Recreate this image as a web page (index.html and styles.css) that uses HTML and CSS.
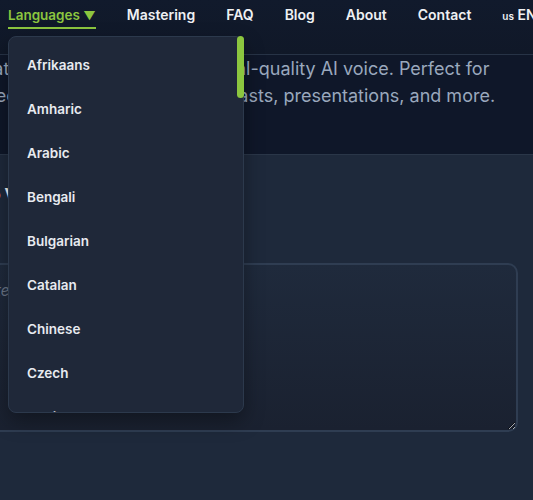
FILE: index.html
```html
<!DOCTYPE html>
<html>
	<head>
		<title>Text to Voice</title>
		<link rel="stylesheet" href="styles.css">
	</head>
	<body>
		<header class="top">
			<nav class="nav">
				<div class="nav-item lang">
					<span class="lang-btn">Languages <span class="caret">&#9660;</span></span>
					<div class="lang-drop">
						<ul class="lang-menu">
							<li>Afrikaans</li><li>Amharic</li><li>Arabic</li><li>Bengali</li><li>Bulgarian</li>
							<li>Catalan</li><li>Chinese</li><li>Czech</li><li>Danish</li><li>Dutch</li>
							<li>English</li><li>Estonian</li><li>Filipino</li><li>Finnish</li><li>French</li>
							<li>Galician</li><li>German</li><li>Greek</li><li>Gujarati</li><li>Hebrew</li>
							<li>Hindi</li><li>Hungarian</li><li>Icelandic</li><li>Indonesian</li><li>Italian</li>
							<li>Japanese</li><li>Kannada</li><li>Korean</li><li>Latvian</li><li>Lithuanian</li>
							<li>Malay</li><li>Malayalam</li><li>Marathi</li><li>Norwegian</li><li>Persian</li>
							<li>Polish</li><li>Portuguese</li><li>Punjabi</li><li>Romanian</li><li>Russian</li>
							<li>Serbian</li><li>Slovak</li><li>Slovenian</li><li>Spanish</li><li>Swahili</li>
							<li>Swedish</li><li>Tamil</li><li>Telugu</li><li>Thai</li><li>Turkish</li>
							<li>Ukrainian</li><li>Urdu</li><li>Vietnamese</li><li>Welsh</li>
						</ul>
						<span class="thumb"></span>
					</div>
				</div>
				<a class="nav-item">Mastering</a>
				<a class="nav-item">FAQ</a>
				<a class="nav-item">Blog</a>
				<a class="nav-item">About</a>
				<a class="nav-item">Contact</a>
				<a class="nav-item locale"><span class="flag">us</span> EN</a>
			</nav>
		</header>
		<section class="hero">
			<p class="hero-text">
				<span class="line">Create lifelike speech with natural-quality AI voice. Perfect for</span>
				<span class="line">projects, vlogs, e-courses, podcasts, presentations, and more.</span>
			</p>
		</section>
		<main class="tool">
			<h2 class="tool-title"><span class="accent">o</span> Voice</h2>
			<textarea class="text-input" placeholder="text here..."></textarea>
		</main>
	</body>
</html>
```

FILE: styles.css
```css
* {box-sizing: border-box;}
html, body {
	margin: 0;
	height: 100%;
	overflow: hidden;
}
body {
	background: #1e293b;
	font-family: Inter, "Noto Sans", sans-serif;
	color: #e5e7eb;
}
.top {
	height: 55px;
	background: linear-gradient(180deg, #111a2c, #101828);
	border-bottom: 1px solid #273346;
}
.nav {
	display: flex;
	align-items: flex-start;
	gap: 31px;
	padding-left: 8px;
	white-space: nowrap;
}
.nav-item {
	display: block;
	padding-top: 6px;
	font-size: 14px;
	font-weight: 600;
	line-height: 18px;
	color: #eef0f3;
}
.lang {position: relative;}
.lang-btn {
	display: block;
	font-size: 13.5px;
	color: #8cc63f;
	padding-bottom: 2px;
	border-bottom: 2px solid #8cc63f;
}
.caret {font-size: 12px;}
.lang-drop {
	position: absolute;
	top: 36px;
	left: 0;
	width: 236px;
	height: 377px;
	z-index: 5;
}
.lang-menu {
	height: 100%;
	margin: 0;
	padding: 6px 0;
	list-style: none;
	overflow: hidden;
	background: #1f2839;
	border: 1px solid #2c394c;
	border-radius: 8px;
	box-shadow: 0 8px 20px rgba(0, 0, 0, .35);
}
.thumb {
	position: absolute;
	top: 0;
	right: 0;
	width: 7px;
	height: 62px;
	background: #8cc63f;
	border-radius: 4px;
}
.lang-menu li {
	padding: 12px 18px;
	font-size: 13.5px;
	font-weight: 600;
	line-height: 20px;
	color: #e8ebf0;
}
.flag {font-size: 10px;}
.hero {
	height: 100px;
	background: #0f1729;
	border-bottom: 1px solid #2a3648;
	padding-top: 0;
}
.hero-text {
	margin: 0 0 0 -37px;
	font-size: 18px;
	line-height: 27px;
	color: #9aa8bd;
	white-space: nowrap;
}
.line {display: block;}
.tool {
	margin-left: -60px;
	padding: 26px 15px 0 0;
}
.tool-title {
	margin: 0 0 56px;
	padding-left: 51px;
	font-size: 16px;
	font-weight: 700;
	line-height: 26px;
	color: #f1f5f9;
	white-space: nowrap;
}
.accent {color: #e59a3c;}
.text-input {
	display: block;
	width: 100%;
	height: 169px;
	padding: 16px 18px 16px 54px;
	background: linear-gradient(180deg, #1f2a3c, #1a2130);
	border: 2px solid #2f3d52;
	border-radius: 10px;
	font-family: Inter, sans-serif;
	font-size: 15px;
	color: #e5e7eb;
	outline: none;
}
.text-input::placeholder {
	color: #6b7587;
	font-style: italic;
}
```
